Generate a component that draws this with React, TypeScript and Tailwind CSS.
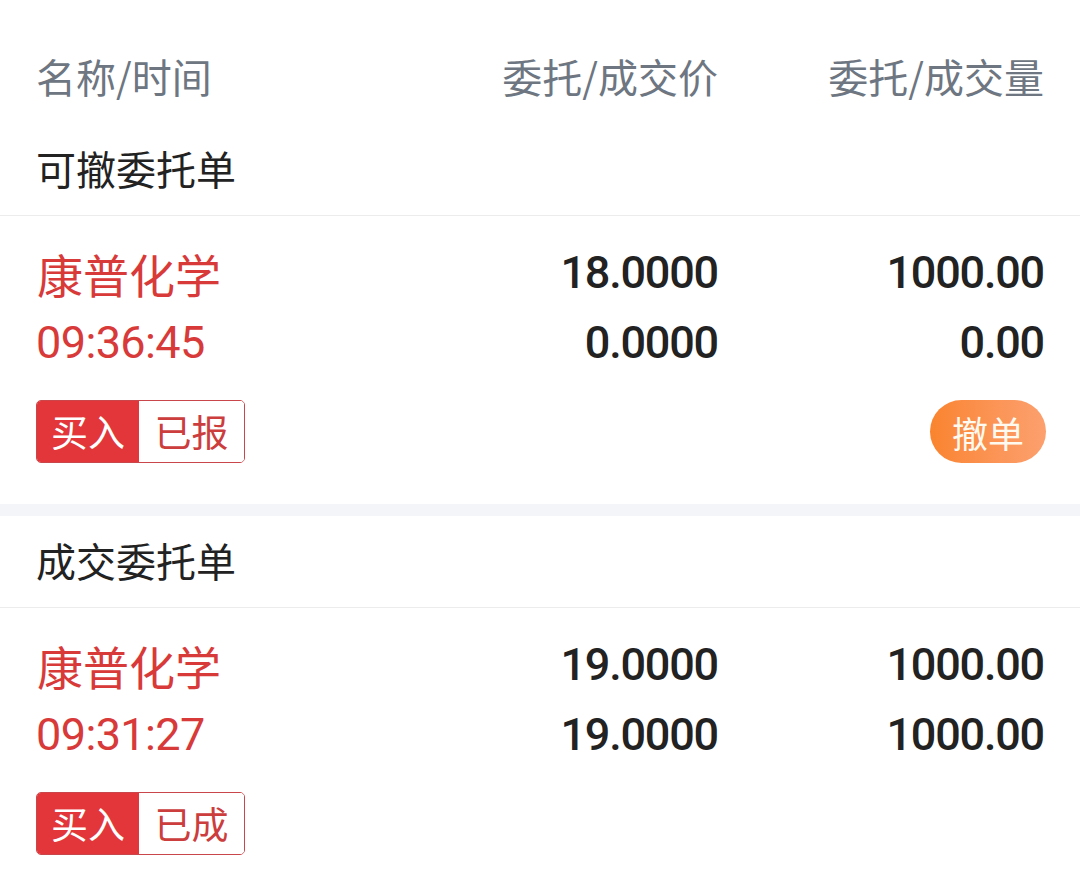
import React from "react";

const CJK = "font-['Noto_Sans_CJK_SC',sans-serif]";
const NUM = "font-['Roboto','Noto_Sans_CJK_SC',sans-serif]";
const PRICE = `${NUM} text-[45px] leading-[56px] font-medium text-[#222] text-right tracking-[-1.2px]`;

type Order = {
  name: string;
  time: string;
  price1: string;
  price2: string;
  qty1: string;
  qty2: string;
  status: string;
  cancel?: boolean;
};

function OrderRow({ o }: { o: Order }) {
  return (
    <div className="grid grid-cols-[1fr_250px_326px] px-[36px] pt-[29px] pb-[41px]">
      <div className={`${CJK} text-[46px] leading-[56px] text-[#d83a3a] pl-[1px]`}>{o.name}</div>
      <div className={PRICE}>{o.price1}</div>
      <div className={PRICE}>{o.qty1}</div>

      <div className={`${NUM} mt-[14px] text-[45px] leading-[56px] text-[#d83a3a] tracking-[-0.6px]`}>{o.time}</div>
      <div className={`${PRICE} mt-[14px]`}>{o.price2}</div>
      <div className={`${PRICE} mt-[14px]`}>{o.qty2}</div>

      <div className="col-span-2 mt-[29px] flex">
        <div className={`${CJK} flex h-[63px] overflow-hidden rounded-[5px] border-[1.5px] border-[#c9474a] text-[37px] leading-none`}>
          <div className="flex w-[102px] items-center justify-center bg-[#e2363a] text-white">买入</div>
          <div className="flex w-[105px] items-center justify-center bg-white text-[#cc3d3d]">{o.status}</div>
        </div>
      </div>
      <div className="mt-[29px] flex justify-end">
        {o.cancel && (
          <div className={`${CJK} mr-[-2px] flex h-[63px] w-[116px] items-center justify-center rounded-full bg-gradient-to-r from-[#fa842d] to-[#fca06e] text-[36px] leading-none text-[#fffaf0]`}>
            撤单
          </div>
        )}
      </div>
    </div>
  );
}

export default function App() {
  const pending: Order = {
    name: "康普化学",
    time: "09:36:45",
    price1: "18.0000",
    price2: "0.0000",
    qty1: "1000.00",
    qty2: "0.00",
    status: "已报",
    cancel: true,
  };
  const done: Order = {
    name: "康普化学",
    time: "09:31:27",
    price1: "19.0000",
    price2: "19.0000",
    qty1: "1000.00",
    qty2: "1000.00",
    status: "已成",
  };
  return (
    <div className="min-h-[894px] w-[1080px] bg-white">
      <div className={`${CJK} grid grid-cols-[1fr_250px_326px] px-[36px] pt-[52px] text-[40px] leading-[48px] text-[#6d7681]`}>
        <div>名称/时间</div>
        <div className="text-right">委托/成交价</div>
        <div className="text-right">委托/成交量</div>
      </div>

      <div className={`${CJK} border-b border-[#ececec] px-[36px] pt-[44px] pb-[23px] text-[40px] leading-[48px] text-[#222]`}>
        可撤委托单
      </div>
      <OrderRow o={pending} />

      <div className="h-[12px] bg-[#f4f5f9]" />

      <div className={`${CJK} border-b border-[#ececec] px-[36px] pt-[20px] pb-[23px] text-[40px] leading-[48px] text-[#222]`}>
        成交委托单
      </div>
      <OrderRow o={done} />
    </div>
  );
}
